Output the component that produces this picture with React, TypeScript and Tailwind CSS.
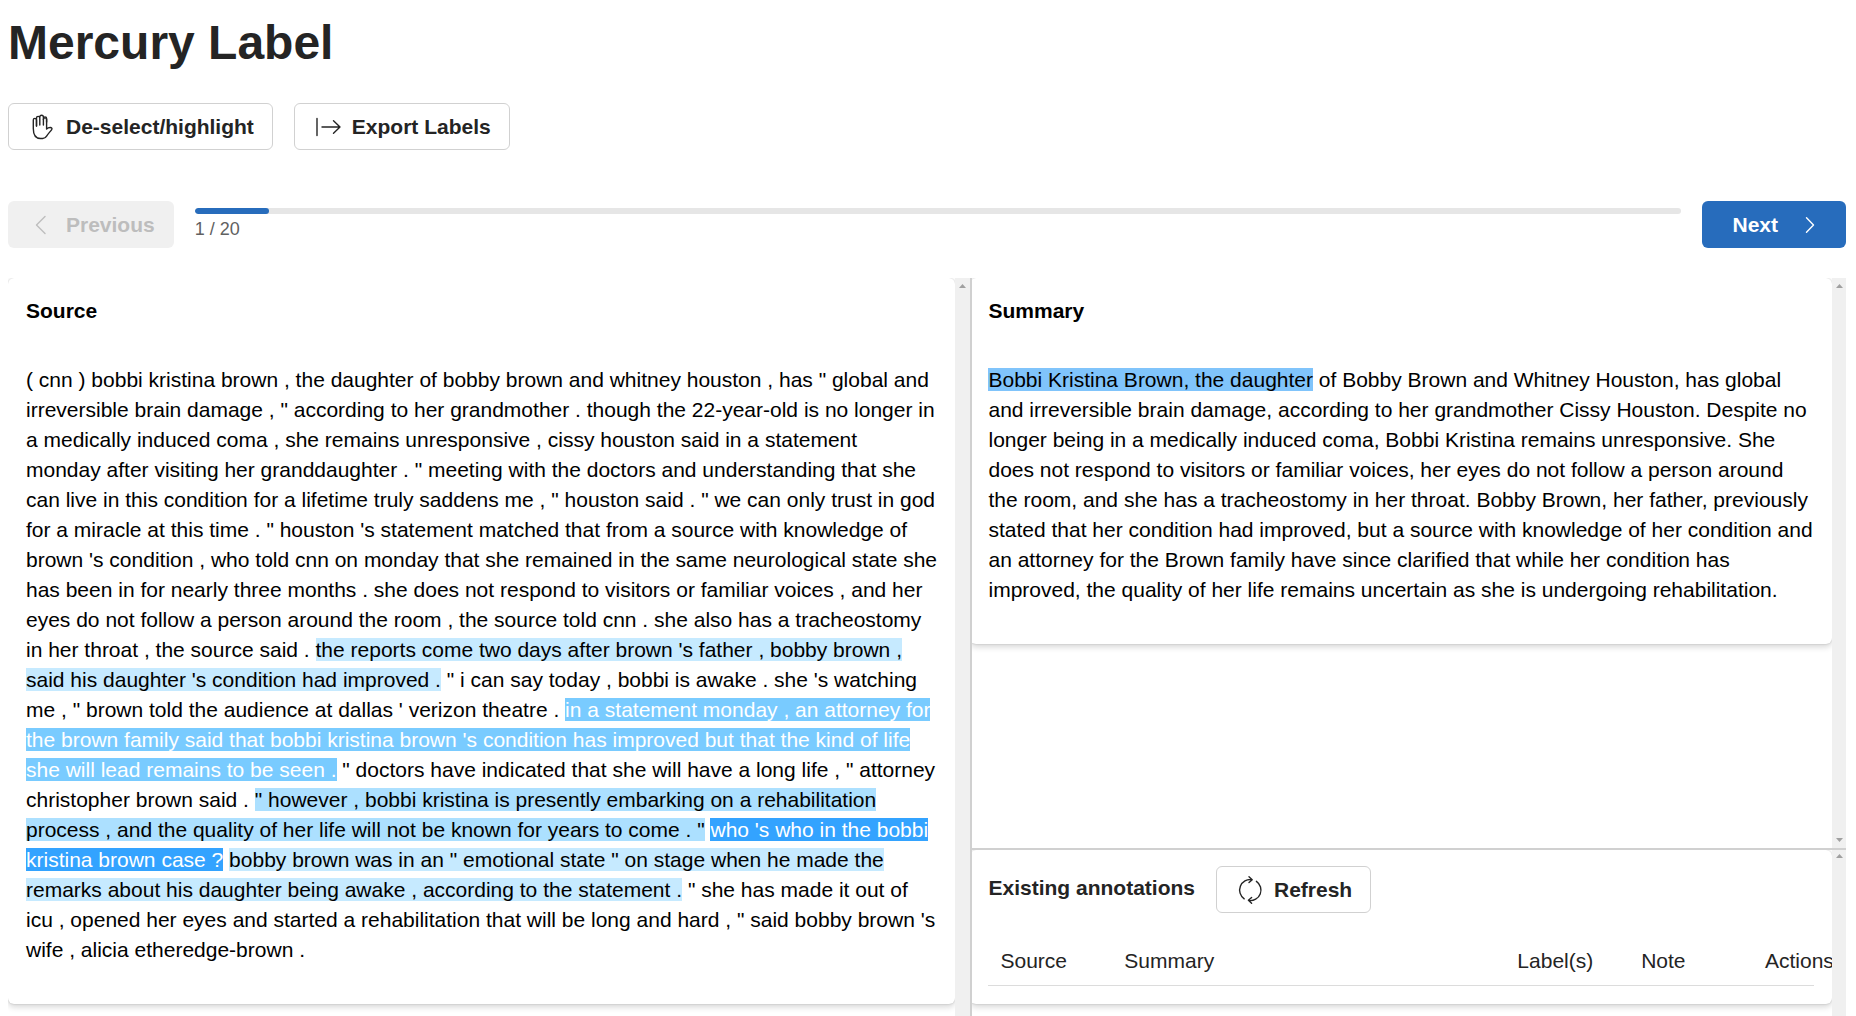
import React from "react";

const CARD = "rounded-md bg-white shadow-[0_0_2px_rgba(0,0,0,0.2),0_3px_6px_rgba(0,0,0,0.16)]";
const OUTLINE_BUTTON =
  "flex h-[47px] items-center rounded-md border border-[#d1d1d1] bg-white pl-5 pr-[18px] font-bold text-[#242424]";

function HandIcon() {
  return (
    <svg className="size-7" viewBox="0 0 28 28" fill="none" stroke="currentColor" strokeWidth="1.4" strokeLinecap="round" strokeLinejoin="round" aria-hidden="true">
      <path d="M7.500 13V7a1.600 1.600 0 0 0-3.200 0v8.500c0 6 2.600 10 7.200 10h2.200c2 0 3.100-.9 4.100-2.600 1.200-2.100 3.400-4.300 4.900-6.300.8-1.100-.2-2-1.300-2.100-1.700-.1-2.800.5-3.800 1.500V6.500a1.600 1.600 0 0 0-3.200 0" />
      <path d="M7.500 13V5a1.600 1.600 0 0 1 3.300 0v7M10.800 12V4a1.700 1.700 0 0 1 3.600 0v8M14.400 12V5.500a1.600 1.600 0 0 1 3.200 0V9" />
    </svg>
  );
}

function ExportIcon() {
  return (
    <svg className="size-7" viewBox="0 0 28 28" fill="none" stroke="currentColor" strokeWidth="1.400" strokeLinecap="round" strokeLinejoin="round" aria-hidden="true">
      <path d="M2 5.500v17M7 14h18M18.500 7.800 25 14l-6.500 6.200" />
    </svg>
  );
}

function RefreshIcon() {
  return (
    <svg className="size-7 overflow-visible" viewBox="0 0 28 28" fill="none" stroke="currentColor" strokeWidth="1.400" strokeLinecap="round" strokeLinejoin="round" aria-hidden="true">
      <path d="M7.200 22.800A10.600 10.600 0 0 1 14.800 3.600M12 .8l3.200 2.900-3.200 2.900" />
      <path d="M19.400 5.300A10.600 10.600 0 0 1 11.800 24.500M14.600 27.200l-3.200-2.900 3.200-2.900" />
    </svg>
  );
}

function Chevron({ d }: { d: string }) {
  return (
    <svg className="size-7" viewBox="0 0 28 28" fill="none" stroke="currentColor" strokeWidth="1.400" strokeLinecap="round" strokeLinejoin="round" aria-hidden="true">
      <path d={d} />
    </svg>
  );
}

function ScrollTrack({ end = false, className }: { end?: boolean; className: string }) {
  return (
    <div className={`flex shrink-0 flex-col items-center justify-between bg-[#f0f0f0] ${className}`} aria-hidden="true">
      <svg className="h-1 w-[7px]" viewBox="0 0 7 4" fill="#a0a0a0">
        <path d="M0 4 3.500 0 7 4z" />
      </svg>
      {end && (
        <svg className="h-1 w-[7px]" viewBox="0 0 7 4" fill="#a0a0a0">
          <path d="M0 0 3.500 4 7 0z" />
        </svg>
      )}
    </div>
  );
}

export default function App() {
  return (
    <div className="flex h-screen flex-col overflow-hidden bg-white pl-2 pr-[10px] font-['Liberation_Sans',Arial,sans-serif] text-[21px] leading-[30px] text-[#242424]">
      <h1 className="mt-2 text-5xl leading-[70px] font-bold">Mercury Label</h1>

      <div className="mt-[25px] flex gap-[21px]">
        <button type="button" className={OUTLINE_BUTTON}>
          <HandIcon />
          <span className="ml-[9px]">De-select/highlight</span>
        </button>
        <button type="button" className={OUTLINE_BUTTON}>
          <ExportIcon />
          <span className="ml-[9px]">Export Labels</span>
        </button>
      </div>

      <div className="mt-[51px] flex gap-[21px]">
        <button type="button" disabled className="flex h-[47px] items-center rounded-md bg-[#f0f0f0] pl-[21px] pr-[19px] font-bold text-[#bdbdbd]">
          <Chevron d="M16 5.500 7.500 14l8.500 8.500" />
          <span className="ml-[9px]">Previous</span>
        </button>
        <div className="mt-[7px] flex-1">
          <div role="progressbar" aria-label="Progress" aria-valuenow={1} aria-valuemin={0} aria-valuemax={20} className="h-1.5 overflow-hidden rounded-full bg-[#e6e6e6]">
            <div className="h-full w-[5%] rounded-full bg-[#276cbc]" />
          </div>
          <p className="text-lg leading-[30px] text-[#616161]">1 / 20</p>
        </div>
        <button type="button" className="flex h-[47px] items-center rounded-md bg-[#276cbc] pl-[30px] pr-[22px] font-bold text-white">
          <span className="mr-[18px]">Next</span>
          <Chevron d="M10.500 6.800 17.500 14l-7 7.200" />
        </button>
      </div>

      <main className="mt-[30px] flex min-h-0 flex-1 items-start">
        <section className="flex h-full flex-[963_1_0%] overflow-hidden">
          <div className="min-w-0 flex-1">
            <article className={`${CARD} px-[18px] pb-[39px] text-black`}>
              <h2 className="pt-[18px] font-bold">Source</h2>
              <p className="pt-[39px]">
                {`( cnn ) bobbi kristina brown , the daughter of bobby brown and whitney houston , has " global and irreversible brain damage , " according to her grandmother . though the 22-year-old is no longer in a medically induced coma , she remains unresponsive , cissy houston said in a statement monday after visiting her granddaughter . " meeting with the doctors and understanding that she can live in this condition for a lifetime truly saddens me , " houston said . " we can only trust in god for a miracle at this time . " houston 's statement matched that from a source with knowledge of brown 's condition , who told cnn on monday that she remained in the same neurological state she has been in for nearly three months . she does not respond to visitors or familiar voices , and her eyes do not follow a person around the room , the source told cnn . she also has a tracheostomy in her throat , the source said . `}
                <mark className="bg-[#c6eaff] text-black">{`the reports come two days after brown 's father , bobby brown , said his daughter 's condition had improved .`}</mark>
                {` " i can say today , bobbi is awake . she 's watching me , " brown told the audience at dallas ' verizon theatre . `}
                <mark className="bg-[#79cbff] text-white">{`in a statement monday , an attorney for the brown family said that bobbi kristina brown 's condition has improved but that the kind of life she will lead remains to be seen .`}</mark>
                {` " doctors have indicated that she will have a long life , " attorney christopher brown said . `}
                <mark className="bg-[#ace0ff] text-black">{`" however , bobbi kristina is presently embarking on a rehabilitation process , and the quality of her life will not be known for years to come . "`}</mark>{" "}
                <mark className="bg-[#33a3ff] text-white">{`who 's who in the bobbi kristina brown case ?`}</mark>{" "}
                <mark className="bg-[#c6eaff] text-black">{`bobby brown was in an " emotional state " on stage when he made the remarks about his daughter being awake , according to the statement .`}</mark>
                {` " she has made it out of icu , opened her eyes and started a rehabilitation that will be long and hard , " said bobby brown 's wife , alicia etheredge-brown .`}
              </p>
            </article>
          </div>
          <ScrollTrack className="w-[15px] py-1.5" />
        </section>

        <div className="relative flex flex-[876_1_0%] flex-col">
          <div className="absolute inset-y-0 left-0 z-10 w-0.5 bg-[#d0d0d0]" />
          <section className="flex h-[570px] overflow-hidden">
            <div className="min-w-0 flex-1">
              <article className={`${CARD} px-[18px] pb-[39px] text-black`}>
                <h2 className="pt-[18px] font-bold">Summary</h2>
                <p className="pt-[39px]">
                  <mark className="bg-[#80c4fb] text-black">Bobbi Kristina Brown, the daughter</mark> of Bobby Brown and Whitney Houston, has global
                  and irreversible brain damage, according to her grandmother Cissy Houston. Despite no longer being in a
                  medically induced coma, Bobbi Kristina remains unresponsive. She does not respond to visitors or familiar
                  voices, her eyes do not follow a person around the room, and she has a tracheostomy in her throat. Bobby
                  Brown, her father, previously stated that her condition had improved, but a source with knowledge of her
                  condition and an attorney for the Brown family have since clarified that while her condition has improved,
                  the quality of her life remains uncertain as she is undergoing rehabilitation.
                </p>
              </article>
            </div>
            <ScrollTrack end className="w-[14px] py-1.5" />
          </section>

          <section className="flex h-[570px] overflow-hidden border-t-2 border-[#d0d0d0]">
            <div className="min-w-0 flex-1 overflow-hidden">
              <article className={`${CARD} px-[18px] pb-[18px]`}>
                <div className="flex items-center gap-[21px] pt-4">
                  <h2 className="pb-1 font-bold">Existing annotations</h2>
                  <button type="button" className={OUTLINE_BUTTON}>
                    <RefreshIcon />
                    <span className="ml-[9px]">Refresh</span>
                  </button>
                </div>
                <table className="mt-6 w-full table-fixed border-collapse">
                  <thead>
                    <tr className="h-12 border-b border-[#dcdcdc] text-left whitespace-nowrap">
                      <th scope="col" className="w-[15%] px-3 font-normal">Source</th>
                      <th scope="col" className="px-3 font-normal">Summary</th>
                      <th scope="col" className="w-[15%] px-3 font-normal">Label(s)</th>
                      <th scope="col" className="w-[15%] px-3 font-normal">Note</th>
                      <th scope="col" className="w-[61px] pl-3 font-normal">Actions</th>
                    </tr>
                  </thead>
                </table>
              </article>
            </div>
            <ScrollTrack className="w-[14px] py-1" />
          </section>
        </div>
      </main>
    </div>
  );
}
